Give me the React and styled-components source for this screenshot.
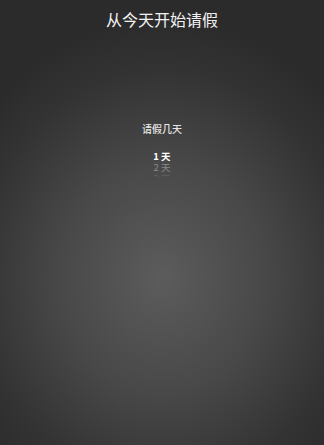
import React from 'react'
import styled, { createGlobalStyle } from 'styled-components'

const GlobalStyle = createGlobalStyle`
    html, body {
        margin: 0;
        padding: 0;
        background: #2b2b2b;
    }
    body {
        font-family: "Noto Sans CJK SC", "Noto Sans", sans-serif;
    }
`

const Page = styled.main`
    width: 324px;
    height: 445px;
    overflow: hidden;
    display: flex;
    flex-direction: column;
    align-items: center;
    background: radial-gradient(ellipse 230px 260px at 162px 278px, #5c5c5c 0%, #484848 45%, #333333 80%, #2b2b2b 100%);
`

const Title = styled.h1`
    margin: 8px 0 0;
    font-size: 16px;
    line-height: 22px;
    font-weight: 400;
    color: #f2f2f2;
`

const Label = styled.div`
    margin-top: 92px;
    font-size: 10px;
    line-height: 14px;
    font-weight: 500;
    color: #e6e6e6;
`

const Wheel = styled.div`
    margin-top: 15px;
    height: 26px;
    overflow: hidden;
    display: flex;
    flex-direction: column;
    align-items: center;
`

const Option = styled.div`
    flex: none;
    font-size: 9.5px;
    line-height: 11px;
    font-weight: ${p => (p.$active ? 700 : 400)};
    color: #ffffff;
    opacity: ${p => p.$fade};
    white-space: pre;
`

const days = [
    { text: '1 天', fade: 1 },
    { text: '2 天', fade: 0.35 },
    { text: '3 天', fade: 0.12 },
]

const App = () => {
    return (
        <>
            <GlobalStyle />
            <Page>
                <Title>从今天开始请假</Title>
                <Label>请假几天</Label>
                <Wheel>
                    {days.map((d, i) => (
                        <Option key={d.text} $active={i === 0} $fade={d.fade}>
                            {d.text}
                        </Option>
                    ))}
                </Wheel>
            </Page>
        </>
    )
}

export default App
